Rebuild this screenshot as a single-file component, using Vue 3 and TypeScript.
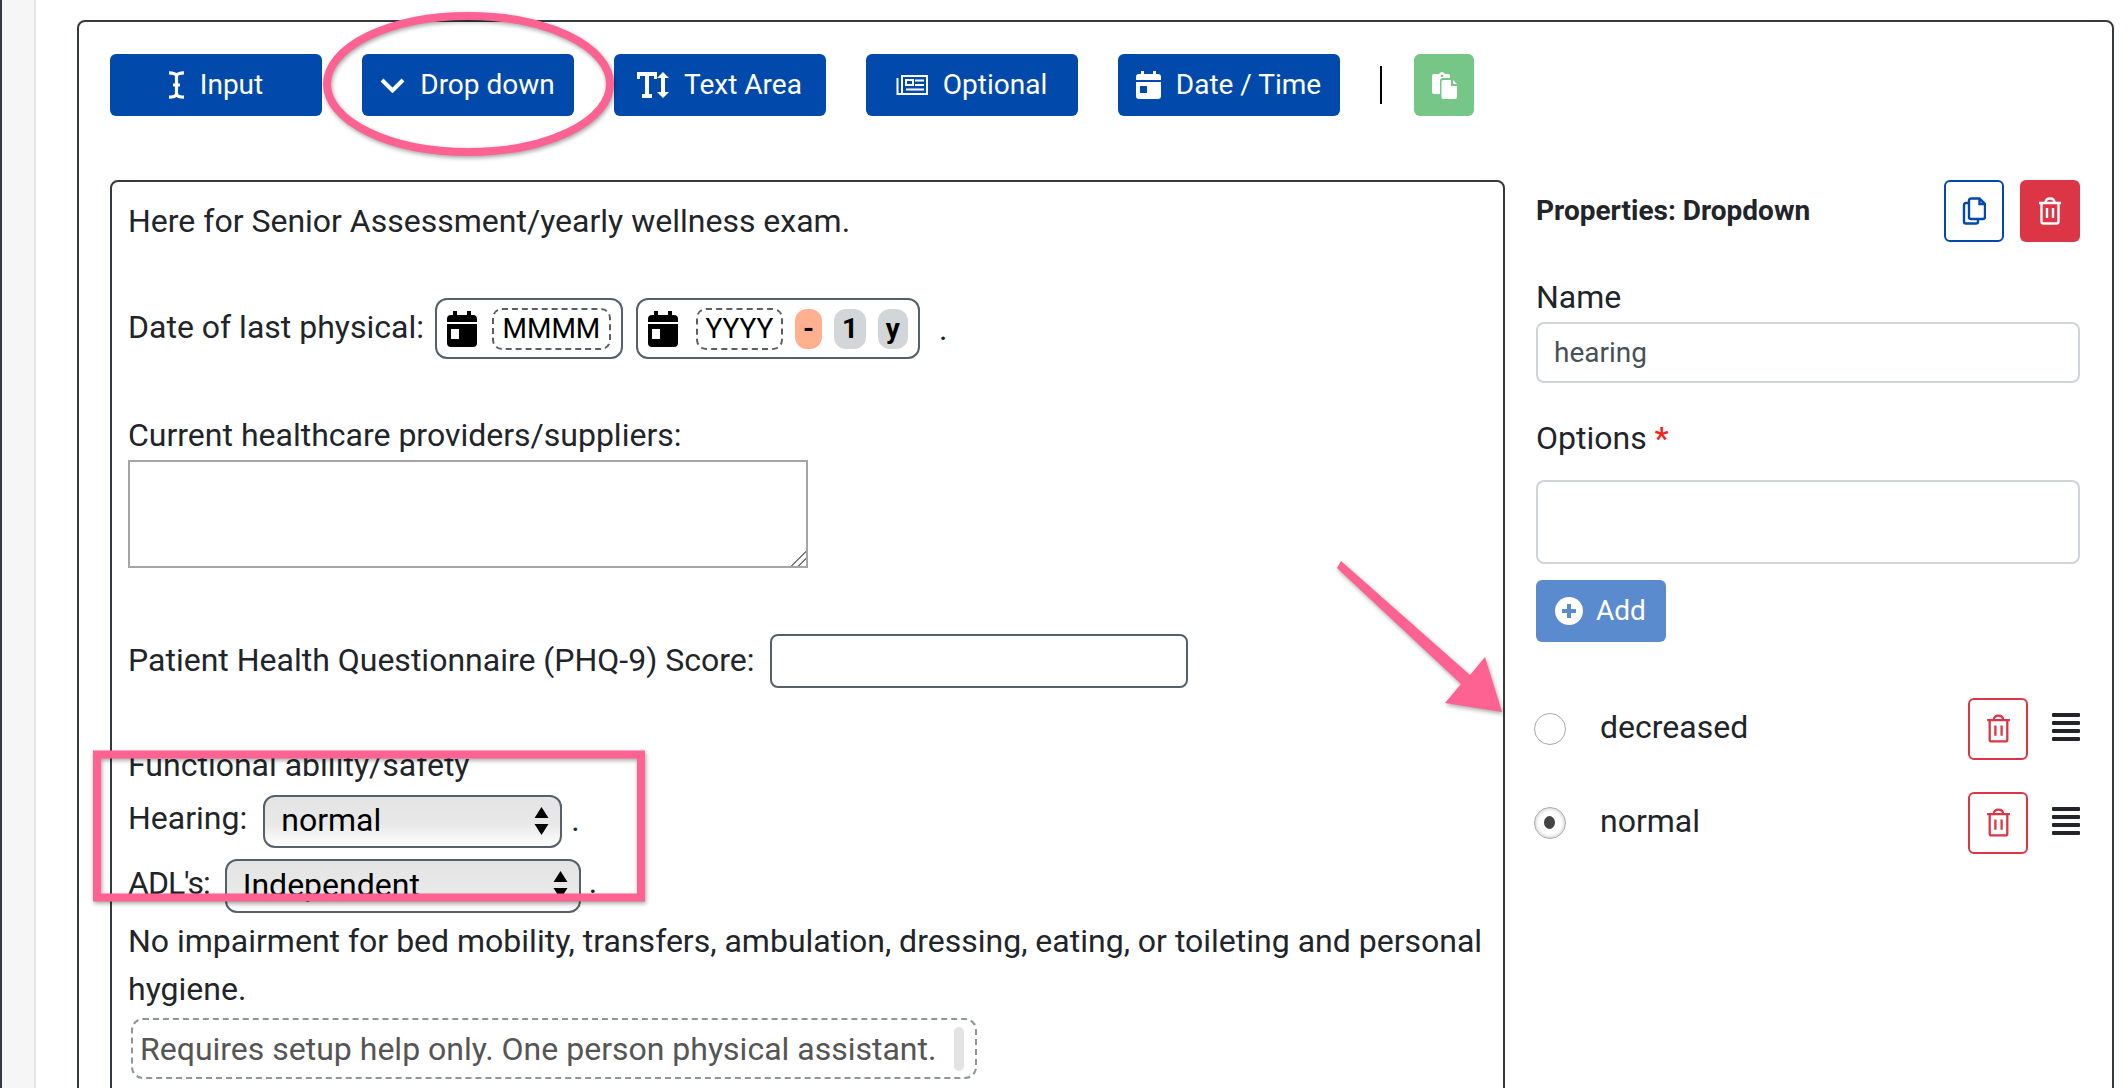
<script setup lang="ts">
const options = [
  { label: 'decreased', checked: false },
  { label: 'normal', checked: true },
]
</script>

<template>
  <div class="page">
    <aside class="rail"></aside>
    <main class="content">
      <section class="card">
        <div class="toolbar">
          <button class="btn primary w212">
            <svg class="ic" width="17" height="28" viewBox="0 0 17 28" fill="none" stroke="#fff" stroke-width="3.200"><path d="M1 1.800C4.500 1.800 7.500 2.500 8.500 4.500C9.500 2.500 12.500 1.800 16 1.800M8.500 4.500V23.500M1 26.200C4.500 26.200 7.500 25.500 8.500 23.500C9.500 25.500 12.500 26.200 16 26.200M5 14H12"/></svg>
            <span class="btn-text">Input</span>
          </button>
          <button class="btn primary w212">
            <svg class="ic" width="25" height="15" viewBox="0 0 25 15" fill="none" stroke="#fff" stroke-width="4"><path d="M2 2L12.500 12.500L23 2"/></svg>
            <span class="btn-text">Drop down</span>
          </button>
          <button class="btn primary w212">
            <svg class="ic" width="32" height="26" viewBox="0 0 32 26" fill="#fff"><path d="M0 0H20V7H17V4H12V22H15V26H5V22H8V4H3V7H0ZM26 0L32 6H28V20H32L26 26L20 20H24V6H20Z"/></svg>
            <span class="btn-text">Text Area</span>
          </button>
          <button class="btn primary w212">
            <svg class="ic" width="32" height="20" viewBox="0 0 32 20" fill="none" stroke="#fff" stroke-width="2"><path d="M6 1H31V19H6ZM1.500 3V19H6"/><path d="M10 5H17V10H10ZM19 5.500H28M19 10H28M10 14.500H28"/></svg>
            <span class="btn-text">Optional</span>
          </button>
          <button class="btn primary w222">
            <svg class="ic" width="25" height="28" viewBox="0 0 25 28" fill="#fff"><path d="M5 0H8V3H17V0H20V3H22Q25 3 25 6V9H0V6Q0 3 3 3H5ZM0 11H25V25Q25 28 22 28H3Q0 28 0 25ZM4 15V22H11V15Z" fill-rule="evenodd"/></svg>
            <span class="btn-text">Date / Time</span>
          </button>
          <span class="divider"></span>
          <button class="btn green">
            <svg width="25" height="27" viewBox="0 0 25 27" fill="#fff"><path fill-rule="evenodd" d="M5 2H7Q8.500 0 10 0Q11.500 0 13 2H16Q18 2 18 4V6H11Q8 6 8 9V22H2Q0 22 0 20V4Q0 2 2 2ZM10 2.500A1.300 1.300 0 1 0 10.010 2.500Z"/><path d="M11 8H19V14H25V25Q25 27 23 27H11Q9.500 27 9.500 25V9.500Q9.500 8 11 8ZM21 8L25 12H21Z"/></svg>
          </button>
        </div>

        <div class="body">
          <div class="editor">
            <p class="line">Here for Senior Assessment/yearly wellness exam.</p>

            <div class="date-row">
              <span class="label">Date of last physical:</span>
              <span class="pill first">
                <svg class="cal" width="30" height="36" viewBox="0 0 30 36" fill="#000"><path fill-rule="evenodd" d="M6 0H10V4H20V0H24V4H26Q30 4 30 8V11H0V8Q0 4 4 4H6ZM0 13H30V32Q30 36 26 36H4Q0 36 0 32ZM4 18V28H12V18Z"/></svg>
                <span class="token mmmm">MMMM</span>
              </span>
              <span class="pill second">
                <svg class="cal" width="30" height="36" viewBox="0 0 30 36" fill="#000"><path fill-rule="evenodd" d="M6 0H10V4H20V0H24V4H26Q30 4 30 8V11H0V8Q0 4 4 4H6ZM0 13H30V32Q30 36 26 36H4Q0 36 0 32ZM4 18V28H12V18Z"/></svg>
                <span class="token yyyy">YYYY</span>
                <span class="chip minus">-</span>
                <span class="chip one">1</span>
                <span class="chip unit">y</span>
              </span>
              <span class="tail-dot">.</span>
            </div>

            <p class="line providers">Current healthcare providers/suppliers:</p>
            <textarea class="area"></textarea>

            <div class="score-row">
              <span class="score-label">Patient Health Questionnaire (PHQ-9) Score:</span>
              <input class="score" type="text" />
            </div>

            <p class="line functional">Functional ability/safety</p>

            <div class="select-row hearing">
              <span class="row-label">Hearing:</span>
              <span class="select-box hearing-box">
                <select><option>normal</option><option>decreased</option></select>
                <svg class="arrows" width="15" height="28" viewBox="0 0 15 28" fill="#000"><path d="M7.500 0L14.500 11H.5ZM7.500 28L.5 17H14.500Z"/></svg>
              </span>
              <span class="after">.</span>
            </div>
            <div class="select-row adl">
              <span class="row-label">ADL's:</span>
              <span class="select-box adl-box">
                <select><option>Independent</option></select>
                <svg class="arrows" width="15" height="28" viewBox="0 0 15 28" fill="#000"><path d="M7.500 0L14.500 11H.5ZM7.500 28L.5 17H14.500Z"/></svg>
              </span>
              <span class="after">.</span>
            </div>

            <p class="para">No impairment for bed mobility, transfers, ambulation, dressing, eating, or toileting and personal hygiene.</p>

            <div class="optional">
              <span>Requires setup help only. One person physical assistant.</span>
              <span class="handle"></span>
            </div>
          </div>

          <aside class="props">
            <div class="props-head">
              <h2>Properties: Dropdown</h2>
              <button class="btn square outline-blue">
                <svg width="24" height="28" viewBox="0 0 24 28" fill="none" stroke="#014aac" stroke-width="2.400"><path d="M9 1.500H17.500L23 7V20Q23 22 21 22H9Q7 22 7 20V3.500Q7 1.500 9 1.500ZM17.500 1.500V7H23"/><path d="M7 6H4Q2 6 2 8V24.500Q2 26.500 4 26.500H14Q16 26.500 16 24.500V22"/></svg>
              </button>
              <button class="btn square danger">
                <svg width="24" height="28" viewBox="0 0 24 28" fill="none" stroke="#fff" stroke-width="2.400"><path d="M1 6H23M7.500 6C7.500 3 9 1.500 12 1.500C15 1.500 16.500 3 16.500 6M3.500 6V24.500Q3.500 26.500 5.500 26.500H18.500Q20.500 26.500 20.500 24.500V6M9 11V21M15 11V21"/></svg>
              </button>
            </div>

            <label class="field-label name-label">Name</label>
            <input class="field" type="text" value="hearing" />

            <label class="field-label options-label">Options <em>*</em></label>
            <input class="field options-field" type="text" />

            <button class="btn add">
              <svg width="28" height="28" viewBox="0 0 28 28"><circle cx="14" cy="14" r="14" fill="#fff"/><path d="M14 7V21M7 14H21" stroke="#5b8bcf" stroke-width="4"/></svg>
              <span class="btn-text">Add</span>
            </button>

            <ul class="opts">
              <li v-for="o in options" :key="o.label" class="opt">
                <span class="radio" :class="{ on: o.checked }"></span>
                <span class="opt-label">{{ o.label }}</span>
                <button class="btn square small outline-red">
                  <svg width="25" height="29" viewBox="0 0 24 28" fill="none" stroke="#dc3545" stroke-width="2.200"><path d="M1 6H23M7.500 6C7.500 3 9 1.500 12 1.500C15 1.500 16.500 3 16.500 6M3.500 6V24.500Q3.500 26.500 5.500 26.500H18.500Q20.500 26.500 20.500 24.500V6M9 11V21M15 11V21"/></svg>
                </button>
                <span class="burger"><i></i><i></i><i></i><i></i></span>
              </li>
            </ul>
          </aside>
        </div>
      </section>
    </main>

    <svg class="marks" width="2128" height="1088" viewBox="0 0 2128 1088" fill="none">
      <ellipse cx="468.500" cy="84" rx="141.500" ry="68" stroke="#fe6292" stroke-width="8"/>
      <rect x="97" y="754.500" width="544" height="143" stroke="#fe6292" stroke-width="8"/>
      <path d="M1337 568L1341 561L1470 675L1485 657L1502 712L1445 703L1461 684Z" fill="#fe6292"/>
    </svg>
  </div>
</template>

<style>
html, body { margin: 0; background: #fff; overflow: hidden; }
</style>

<style scoped>
* { box-sizing: border-box; }
.page {
  position: relative;
  display: flex;
  width: 2128px;
  height: 1088px;
  overflow: hidden;
  background: #fff;
  font-family: Roboto, "Liberation Sans", sans-serif;
  color: #212529;
}
.rail {
  width: 36px;
  flex: none;
  background: #f6f6f6;
  border-left: 2px solid #343a40;
  border-right: 2px solid #e4e4e4;
}
.content { padding: 20px 0 0 41px; }
.card {
  width: 2037px;
  height: 1200px;
  border: 2px solid #343a40;
  border-radius: 8px;
  padding: 32px 31px;
}
.btn {
  display: inline-flex;
  align-items: center;
  justify-content: center;
  height: 62px;
  border: 0;
  border-radius: 6px;
  padding: 0;
  font: 400 28px Roboto, sans-serif;
  color: #fff;
}
.btn-text { margin: 0 1px 2px -1px; }
.primary { background: #014aac; gap: 16px; }
.w212 { width: 212px; }
.w222 { width: 222px; }
.toolbar { display: flex; align-items: center; gap: 40px; height: 62px; margin-bottom: 64px; }
.divider { width: 2px; height: 38px; background: #000; margin-right: -8px; }
.green { width: 60px; background: #75c687; }
.body { display: flex; align-items: flex-start; }
.editor {
  width: 1395px;
  height: 1000px;
  flex: none;
  border: 2px solid #343a40;
  border-radius: 8px;
  padding: 15px 14px 0 16px;
  font-size: 32px;
  line-height: 48px;
}
.line { margin: 0; height: 48px; }
.date-row { display: flex; align-items: center; height: 61px; margin-top: 53px; }
.label { margin-right: 11px; margin-bottom: 4px; }
.pill {
  display: flex;
  align-items: center;
  height: 61px;
  border: 2px solid #56606b;
  border-radius: 12px;
  color: #000;
}
.pill.first { width: 188px; padding-left: 10px; }
.pill.second { width: 284px; padding-left: 10px; margin-left: 13px; }
.cal { flex: none; margin-right: 18px; }
.first .cal { margin-right: 15px; }
.token {
  display: flex;
  align-items: center;
  justify-content: center;
  height: 42px;
  border: 2px dashed #5a5f66;
  border-radius: 10px;
  font-size: 28px;
}
.mmmm { width: 119px; }
.yyyy { width: 87px; margin-right: 12px; }
.chip {
  display: flex;
  align-items: center;
  justify-content: center;
  height: 40px;
  border-radius: 12px;
  font-weight: 700;
  font-size: 28px;
  background: #d2d6d8;
}
.minus { width: 27px; background: #ffb08e; margin-right: 12px; }
.one { width: 32px; margin-right: 12px; }
.unit { width: 30px; }
.tail-dot { margin-left: 19px; }
.providers { margin-top: 52px; }
.area {
  display: block;
  width: 680px;
  height: 108px;
  margin-top: 1px;
  border: 2px solid #a5a5a5;
  border-radius: 0;
  outline: none;
}
.area::-webkit-resizer {
  background: linear-gradient(135deg, transparent 0 48%, #777 48% 55%, transparent 55% 72%, #777 72% 79%, transparent 79%);
}
.score-row { display: flex; align-items: center; height: 54px; margin-top: 66px; gap: 15px; }
.score-label { margin-bottom: 2px; }
.score { width: 418px; height: 54px; border: 2px solid #56606b; border-radius: 8px; }
.functional { margin-top: 53px; }
.select-row { display: flex; align-items: center; height: 53px; }
.hearing { margin-top: 6px; }
.adl { margin-top: 11px; height: 54px; }
.hearing .row-label { margin-bottom: 8px; }
.adl .row-label { margin-bottom: 6px; letter-spacing: -1px; margin-right: 5px; }
.select-box { position: relative; display: block; height: 100%; }
.hearing-box { width: 299px; margin-left: 16px; }
.adl-box { width: 356px; margin-left: 10px; }
.select-box select {
  appearance: none;
  display: block;
  width: 100%;
  height: 100%;
  padding: 0 0 3px 16px;
  border: 2px solid #56606b;
  border-radius: 12px;
  background: linear-gradient(#e4e4e4 0%, #e8e8e8 55%, #fff 100%);
  font: 400 32px Roboto, sans-serif;
  color: #000;
}
.arrows { position: absolute; right: 13px; top: 12px; }
.after { margin-left: 9px; margin-bottom: 4px; }
.adl .after { margin-bottom: 8px; margin-left: 8px; }
.para { margin: 4px 0 0; }
.optional {
  display: flex;
  align-items: center;
  justify-content: space-between;
  width: 846px;
  height: 61px;
  margin: 5px 0 0 3px;
  padding: 0 11px 0 7px;
  border: 2px dashed #8f959b;
  border-radius: 12px;
  color: #555;
}
.handle { width: 10px; height: 44px; background: #e3e3e3; border-radius: 5px; }
.props { width: 544px; margin-left: 31px; flex: none; font-size: 32px; }
.props-head { display: flex; align-items: center; gap: 16px; }
.props-head h2 { margin: -2px 0 0; flex: 1; font-size: 28px; font-weight: 700; }
.square { width: 60px; background: #fff; }
.outline-blue { border: 2px solid #014aac; }
.danger { background: #dc3545; }
.field-label { display: block; line-height: 44px; }
.name-label { margin-top: 33px; }
.options-label { margin-top: 33px; }
.options-label em { color: #f0261b; font-style: normal; font-weight: 500; }
.field {
  display: block;
  width: 100%;
  height: 61px;
  margin-top: 3px;
  padding: 0 12px 0 16px;
  border: 2px solid #ced4da;
  border-radius: 8px;
  font: 400 28px Roboto, sans-serif;
  color: #495057;
  outline: none;
}
.options-field { height: 84px; margin-top: 20px; }
.add { width: 130px; gap: 14px; margin-top: 16px; background: #5b8bcf; }
.opts { list-style: none; margin: 56px 0 0; padding: 0; }
.opt { display: flex; align-items: center; height: 61px; margin-bottom: 33px; }
.radio {
  width: 32px;
  height: 32px;
  margin-left: -2px;
  border-radius: 50%;
  border: 1.500px solid #aaa;
  background: #fff;
  position: relative;
  flex: none;
}
.radio.on { box-shadow: inset 0 0 4px #bbb; }
.radio.on::after {
  content: "";
  position: absolute;
  left: 9px;
  top: 8px;
  width: 11px;
  height: 13px;
  border-radius: 50%;
  background: #444;
}
.opt-label { margin: 0 0 3px 34px; flex: 1; }
.small { width: 60px; }
.outline-red { border: 2px solid #dc3545; }
.burger { display: flex; flex-direction: column; gap: 4px; width: 28px; margin-left: 24px; margin-top: -4px; }
.burger i { display: block; height: 4px; border-radius: 1px; background: #212529; }
.marks {
  position: absolute;
  left: 0;
  top: 0;
  pointer-events: none;
  filter: drop-shadow(1px 2px 2px rgba(0, 0, 0, .35));
}
</style>
